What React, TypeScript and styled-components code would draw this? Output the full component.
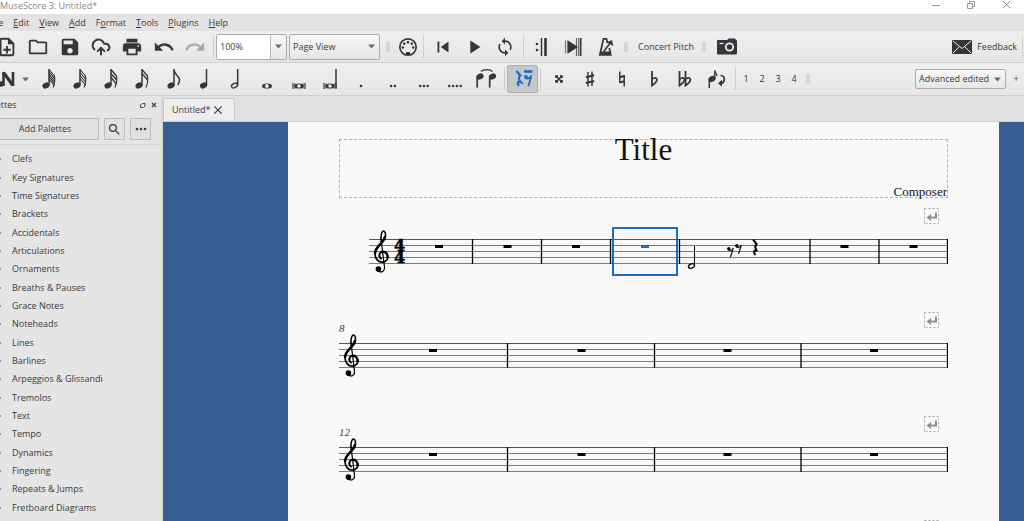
import React from 'react';
import styled, { createGlobalStyle, css } from 'styled-components';
import {
  MdOutlineNoteAdd, MdOutlineFolder, MdSave, MdPrint, MdUndo, MdRedo,
  MdSkipPrevious, MdPlayArrow, MdLoop, MdSearch, MdMoreHoriz, MdClose,
} from 'react-icons/md';
import { CloudUpload } from 'lucide-react';

const ink = '#33373c';
const blue = '#1a6cc4';

const GlobalStyle = createGlobalStyle`
  * { box-sizing: border-box; }
  body { margin: 0; background: #e3e3e3; }
  body, button, input, select {
    font-family: "Open Sans", "Noto Sans", sans-serif;
    font-size: 9px;
    line-height: 14px;
    color: #3a3a3a;
  }
  button, input, select { margin: 0; padding: 0; border: 0; background: none; }
  ul { margin: 0; padding: 0; list-style: none; }
`;

/* ---------- window frame ---------- */

const Window = styled.div`
  height: 100vh;
  display: flex;
  flex-direction: column;
  overflow: hidden;
`;

const TitleBar = styled.header`
  flex: none;
  height: 14px;
  display: flex;
  justify-content: space-between;
  background: #fff;
  color: #8a8a8a;
  line-height: 12px;
  white-space: nowrap;
`;

const WindowControls = styled.div`
  display: flex;
  gap: 24px;
  padding-right: 12px;
`;

const WindowButton = styled.button`
  width: 11px;
  height: 10px;
  svg { display: block; }
`;

const MenuBar = styled.nav`
  flex: none;
  height: 17px;
  display: flex;
  gap: 10px;
  margin-left: -11px;
  background: #e3e3e3;
`;

const MenuItem = styled.button`
  line-height: 16px;
  u { text-underline-offset: 1px; }
`;

/* ---------- toolbars ---------- */

const ToolBar = styled.div<{ $height?: number }>`
  flex: none;
  height: ${p => p.$height ?? 32}px;
  display: flex;
  align-items: center;
  background: linear-gradient(#efefef, #e6e6e6);
  border-bottom: 1px solid #cfcfcf;
`;

const IconGroup = styled.div<{ $width: number; $pull?: number }>`
  flex: 0 0 ${p => p.$width}px;
  margin-left: ${p => -(p.$pull ?? 0)}px;
  display: grid;
  grid-auto-flow: column;
  grid-auto-columns: 1fr;
`;

const IconButton = styled.button<{ $faded?: boolean; $active?: boolean }>`
  height: 28px;
  min-width: 16px;
  display: flex;
  align-items: center;
  justify-content: center;
  color: ${p => (p.$faded ? '#a9abad' : ink)};
  svg { flex: none; display: block; }
  ${p => p.$active && css`
    width: 31px;
    color: ${blue};
    background: #c6c7c9;
    border: 1px solid #b0b0b0;
    border-radius: 2px;
  `}
`;

const TextButton = styled.button`
  display: flex;
  align-items: center;
  gap: 5px;
  padding: 0 4px;
  white-space: nowrap;
`;

const Separator = styled.span<{ $gap?: number }>`
  flex: none;
  width: 1px;
  height: 22px;
  margin: 0 ${p => p.$gap ?? 2}px;
  background: #cdcdcd;
`;

const Handle = styled.span`
  flex: none;
  width: 4px;
  height: 10px;
  margin: 0 6px 0 4px;
  background: radial-gradient(circle, #c6c6c6 0 0.5px, transparent 1px) 0 0 / 2px 2px;
`;

const Spacer = styled.span`flex: 1;`;

const Combo = styled.div<{ $width: number; $small?: boolean }>`
  flex: none;
  width: ${p => p.$width}px;
  height: ${p => (p.$small ? 20 : 26)}px;
  margin-right: 2px;
  display: flex;
  align-items: center;
  position: relative;
  border: 1px solid #ababab;
  border-radius: 2px;
  background: linear-gradient(#f8f8f8, #e6e6e6);
`;

const ZoomInput = styled.input`
  flex: 1;
  min-width: 0;
  height: 100%;
  padding-left: 3px;
  background: #fff;
  border-right: 1px solid #bbb;
`;

const DropButton = styled.button`
  width: 15px;
  height: 100%;
  display: flex;
  align-items: center;
  justify-content: center;
`;

const Select = styled.select`
  appearance: none;
  width: 100%;
  height: 100%;
  padding-left: 3px;
`;

const SelectArrow = styled.span`
  position: absolute;
  right: 4px;
  display: flex;
  pointer-events: none;
`;

/* ---------- palettes ---------- */

const Body = styled.div`
  flex: 1;
  min-height: 0;
  display: flex;
`;

const Palettes = styled.aside`
  flex: 0 0 163px;
  display: flex;
  flex-direction: column;
  padding: 2px 0 4px;
  border-right: 2px solid #d9d9d9;
  background: #e5e5e5;
`;

const PanelHeader = styled.div`
  height: 14px;
  margin-left: -17px;
  padding-right: 2px;
  display: flex;
  align-items: center;
  h2 { margin: 0; flex: 1; font-size: 9px; font-weight: 400; line-height: 14px; }
`;

const PanelButton = styled.button`
  width: 11px;
  height: 11px;
  display: flex;
  align-items: center;
  justify-content: center;
  svg { flex: none; }
`;

const PaletteTools = styled.div`
  display: flex;
  gap: 5px;
  margin-left: -9px;
  padding: 6px 10px 4px 0;
  border-bottom: 1px solid #d4d4d4;
  margin-bottom: 5px;
`;

const PaletteButton = styled.button<{ $wide?: boolean }>`
  flex: ${p => (p.$wide ? '1' : '0 0 21px')};
  height: 22px;
  display: flex;
  align-items: center;
  justify-content: center;
  border: 1px solid #bcbcbc;
  background: #e1e1e1;
`;

const PaletteList = styled.ul`
  flex: 1;
  display: grid;
  grid-auto-rows: 1fr;
`;

const PaletteRow = styled.li`
  min-height: 18px;
  margin-left: -1px;
  display: flex;
  align-items: center;
  gap: 11px;
  white-space: nowrap;
  &::before {
    content: '';
    border: 2px solid transparent;
    border-left: 2px solid #444;
    border-right: 0;
  }
`;

/* ---------- document ---------- */

const Main = styled.main`
  flex: 1;
  min-width: 0;
  display: flex;
  flex-direction: column;
`;

const TabBar = styled.div`
  flex: none;
  height: 26px;
  padding-top: 2px;
  display: flex;
  background: #e1e1e1;
  border-bottom: 1px solid #d0d0d0;
`;

const Tab = styled.div`
  width: 72px;
  padding: 0 11px 0 8px;
  display: flex;
  align-items: center;
  justify-content: space-between;
  background: #ededed;
  border: 1px solid #c9c9c9;
  border-bottom: 0;
`;

const Canvas = styled.div`
  flex: 1;
  min-height: 0;
  overflow: hidden;
  padding: 0 25px 0 125px;
  background: #375d93;
`;

const Page = styled.article`
  min-height: 100%;
  padding: 17px 51px 0;
  background: #f9f9f9;
`;

const TitleFrame = styled.div`
  height: 59px;
  margin-bottom: 3px;
  display: flex;
  flex-direction: column;
  justify-content: space-between;
  border: 1px dashed #b3b3b3;
  color: #111;
  font-family: "Liberation Serif", serif;
  h1 { margin: 0; font-size: 31px; font-weight: 400; line-height: 20px; text-align: center; }
  p { margin: 0; font-size: 13px; line-height: 11px; text-align: right; }
`;

const System = styled.svg`
  display: block;
  width: 100%;
  height: auto;
`;

/* ---------- small drawings ---------- */

const Arrow = () => (
  <svg width="7" height="5" viewBox="0 0 7 5"><path d="M0 0.5h7L3.5 4.5z" fill="#6b6b6b" /></svg>
);

const Glyph = ({ children }: { children: React.ReactNode }) => (
  <svg width="24" height="24" viewBox="0 0 24 24" fill="none" stroke="currentColor" strokeWidth="1.5">
    {children}
  </svg>
);

const Head = ({ x = 10.5, y = 18.5 }: { x?: number; y?: number }) => (
  <ellipse cx={x} cy={y} rx="3.7" ry="2.8" transform={`rotate(-25 ${x} ${y})`} fill="currentColor" stroke="none" />
);

const FlaggedNote = ({ flags }: { flags: number }) => {
  const step = 12 / flags;
  return (
    <Glyph>
      <Head x={9} />
      <path d="M12 18V2" />
      {flags === 1 ? (
        <path d="M12 3C12.5 8 17.5 9 17.5 13C17.5 15 16.5 16.5 15.8 18" strokeWidth="1.5" />
      ) : (
        Array.from({ length: flags }, (_, i) => (
          <path
            key={i}
            d={`M12 ${2.5 + i * Math.min(step, 4)}l5.5 6.5`}
            strokeWidth={flags > 3 ? 1.1 : 1.3}
          />
        ))
      )}
      {flags > 1 && <path d="M17.3 8.500C18.200 12 18 16 16 20.500" strokeWidth="1.200" />}
    </Glyph>
  );
};

const HalfIcon = () => (
  <Glyph>
    <ellipse cx="10.500" cy="18.5" rx="3.2" ry="2" transform="rotate(-28 10.500 18.5)" strokeWidth="1.4" />
    <path d="M13.7 18V2" />
  </Glyph>
);

const WholeIcon = () => (
  <Glyph>
    <path fillRule="evenodd" fill="currentColor" stroke="none" d="M7 19a5 2.6 0 1 0 10 0a5 2.6 0 1 0 -10 0zM10.2 18.2c-.6 1 .4 2.8 1.7 2.7c1.4 0 2.4-1 1.9-2.1c-.4-1.1-1.200-1.700-2.200-1.700c-.7 0-1.200.4-1.400 1.100z" />
  </Glyph>
);

const BreveIcon = ({ stem }: { stem?: boolean }) => (
  <Glyph>
    <path d="M6 16v6M18 16v6" strokeWidth="1.200" />
    <path d="M8 16.500v5M16 16.500v5" strokeWidth="1.200" />
    <path fillRule="evenodd" fill="currentColor" stroke="none" d="M7.500 19a4.500 2.600 0 1 0 9 0a4.500 2.600 0 1 0 -9 0zM10.400 18.200c-.6 1 .4 2.600 1.500 2.500c1.300 0 2.200-.9 1.800-2c-.4-1-1.200-1.500-2-1.500c-.7 0-1.100.3-1.300 1z" />
    {stem && <path d="M18 21V2" />}
  </Glyph>
);

const DotsIcon = ({ count }: { count: number }) => (
  <Glyph>
    {Array.from({ length: count }, (_, i) => (
      <circle key={i} cx={12 + (i - (count - 1) / 2) * 3.8} cy="19" r="1.3" fill="currentColor" stroke="none" />
    ))}
  </Glyph>
);

const TieIcon = () => (
  <Glyph>
    <Head x={6} y={9.500} />
    <Head x={18.500} y={9.500} />
    <path d="M3.200 10v10.500M15.700 10v10.500" strokeWidth="1.700" />
    <path d="M7 4.500C9.500 2 16 2 18.500 4.500" strokeWidth="1.300" />
  </Glyph>
);

const VoiceRestIcon = () => (
  <Glyph>
    <path d="M5.500 4L9.300 8.500C7 10.500 7.200 12 9.800 15.200C6.500 14 5.800 16 8 19" strokeWidth="2.200" />
    <path d="M13 4.500h8.500" strokeWidth="2.600" />
    <circle cx="15" cy="10" r="1.900" fill="currentColor" stroke="none" />
    <path d="M15 11.500C18 12 19.500 10.500 20.500 8.500L17.500 19" strokeWidth="1.700" />
  </Glyph>
);

const DoubleSharp = () => (
  <Glyph>
    <path d="M9.500 9.500l5 5M14.500 9.500l-5 5" strokeWidth="1.600" />
    <path d="M8.200 8.200h2.800v2.800h-2.800zM13 8.200h2.800v2.800h-2.800zM8.200 13h2.800v2.800h-2.800zM13 13h2.800v2.800h-2.800z" fill="currentColor" stroke="none" />
  </Glyph>
);

const Sharp = () => (
  <Glyph>
    <path d="M10 5v14.500M14 4.500v14.500" strokeWidth="1.500" />
    <path d="M7.800 10.300l8.400-2M7.800 16l8.400-2" strokeWidth="2.200" />
  </Glyph>
);

const Natural = () => (
  <Glyph>
    <path d="M9.800 4.500v11.500M14.200 8v11.500" strokeWidth="1.500" />
    <path d="M9.800 10.200l4.400-1.200M9.800 15.500l4.400-1.200" strokeWidth="2.200" />
  </Glyph>
);

const Flat = ({ x = 10 }: { x?: number }) => (
  <path d={`M${x} 4v14.500c3-2 5-3.800 4.900-6c-.1-2-2.900-2.200-4.900 0`} strokeWidth="1.800" />
);

const FlipIcon = () => (
  <Glyph>
    <Head x={7} y={12} />
    <path d="M4.300 12.500v8.500M9.800 11.500V3.500" />
    <path d="M9.800 4C10 6 12.500 6.500 12 9" strokeWidth="1.200" />
    <path d="M15.500 8.500C18.500 8.500 19.700 10.500 19.200 13c-.3 2-1.500 3.200-3.700 3.500" strokeWidth="1.700" />
    <path d="M17 12.800v7l-4-3.500z" fill="currentColor" stroke="none" />
  </Glyph>
);

const NoteInputIcon = () => (
  <Glyph>
    <path d="M9.500 5v14M19 5v14" strokeWidth="2.600" />
    <path d="M9.500 5.500l9.500 13" strokeWidth="3.200" />
    <ellipse cx="6.500" cy="17" rx="3.800" ry="2.700" fill="currentColor" stroke="none" />
  </Glyph>
);

const MidiIcon = () => (
  <Glyph>
    <circle cx="12" cy="12" r="8.200" strokeWidth="1.700" />
    <path d="M10 17h4v3h-4z" fill="currentColor" stroke="none" />
    {[[6.800, 12.500], [8.200, 8.800], [12, 7.300], [15.800, 8.800], [17.200, 12.500]].map(([x, y]) => (
      <circle key={x} cx={x} cy={y} r="1.300" fill="currentColor" stroke="none" />
    ))}
  </Glyph>
);

const RepeatIcon = () => (
  <Glyph>
    <path d="M11.500 3v18" strokeWidth="1.500" />
    <path d="M15.500 3v18" strokeWidth="2.600" />
    <circle cx="7" cy="9" r="1.300" fill="currentColor" stroke="none" />
    <circle cx="7" cy="15" r="1.300" fill="currentColor" stroke="none" />
  </Glyph>
);

const PanIcon = () => (
  <Glyph>
    <path d="M4.500 5.500v13M6.500 5.500v13" strokeWidth="1.200" strokeOpacity=".6" />
    <path d="M7 5.500L17 12l-10 6.500z" fill="currentColor" stroke="none" />
    <path d="M15.500 3v18M17.700 3v18" strokeWidth="1.200" strokeOpacity=".75" />
    <path d="M19.700 3v18" strokeWidth="1.600" />
  </Glyph>
);

const MetronomeIcon = () => (
  <Glyph>
    <path d="M15.500 8L14.500 3.800H11.500L7.800 20h11l-1.500-7" strokeWidth="1.700" />
    <path d="M8.500 16.500h9.500v3.500H7.800z" fill="currentColor" stroke="none" />
    <path d="M11.500 17L19.500 6" strokeWidth="1.500" />
    <path d="M16.200 7.200l3.300-.9l.7 3.200z" fill="currentColor" />
  </Glyph>
);

const CameraIcon = () => (
  <Glyph>
    <path fill="currentColor" stroke="none" d="M3.500 5h8.500l1.500-1.500h6.500L21 5a1 1 0 0 1 1 1v12.500a1 1 0 0 1-1 1H3a1 1 0 0 1-1-1V6a1 1 0 0 1 1.500-1z" />
    <circle cx="14.500" cy="12" r="3.700" stroke="#f0f0f0" strokeWidth="1.800" />
    <path d="M4.500 8.500h4" stroke="#f0f0f0" strokeWidth="1.300" />
  </Glyph>
);

const MailIcon = () => (
  <svg width="20" height="14" viewBox="0 0 20 14">
    <rect width="20" height="14" rx="1" fill={ink} />
    <path d="M1 1l9 7.500L19 1M1 13l6.500-6.500M19 13l-6.500-6.500" fill="none" stroke="#eee" strokeWidth="1" />
  </svg>
);

/* ---------- score engraving ---------- */

const SPACE = 6;
const TOP = 38.5;

const TrebleClef = ({ x }: { x: number }) => (
  <g transform={`translate(${x} ${TOP})`} fill="none" stroke="#000" strokeLinecap="round">
    <path d="M7.300 2C6 -4 8 -8.800 10 -8.400C12 -7.400 11.800 -3.500 10.800 -1" strokeWidth="1.500" />
    <path d="M10.900 -2.500C9.500 4 1.500 6.500 1.100 13.500" strokeWidth="2.600" />
    <path d="M.900 13.500C1 19.500 4.500 22.800 8.500 22.600C12.300 22.400 14 20 13.700 16.700" strokeWidth="1.700" />
    <path d="M13.500 17.800C13.800 14 11.500 12 8.700 12.300" strokeWidth="2.400" />
    <path d="M8.700 12.200C5.100 12.200 4.200 16.800 6.900 19" strokeWidth="2" />
    <path d="M7.300 2L10.500 27.500C10.900 31.500 8 33.300 5 32" strokeWidth="1.200" />
    <circle cx="4.400" cy="29.600" r="2.800" fill="#000" stroke="none" />
  </g>
);

const LineBreakMark = () => (
  <g>
    <rect x="585.500" y="7.500" width="14" height="15" fill="none" stroke="#a8a8a8" strokeDasharray="2 2" />
    <path d="M597 11.500v5h-6" fill="none" stroke="#8f8f8f" strokeWidth="2" />
    <path d="M592 13v7l-4.500-3.500z" fill="#8f8f8f" />
  </g>
);

const EighthRest = ({ x, y }: { x: number; y: number }) => (
  <g transform={`translate(${x} ${y})`}>
    <circle cx="1.800" cy="1.800" r="1.700" />
    <path d="M1.500 3C4 4 5.500 3 6.300 1L3.500 10" fill="none" stroke="#000" strokeWidth="1.100" />
  </g>
);

type StaffProps = {
  start?: number;
  bars: number[];
  rests: number[];
  selected?: number;
  number?: string;
  children?: React.ReactNode;
};

const Staff = ({ start = 0, bars, rests, selected, number, children }: StaffProps) => (
  <System viewBox="0 0 609 104" role="img" aria-label="Staff">
    <LineBreakMark />
    {number && (
      <text x="0" y="27" fontFamily="Liberation Serif, serif" fontStyle="italic" fontSize="11" fill="#444">{number}</text>
    )}
    {[0, 1, 2, 3, 4].map(i => (
      <path key={i} d={`M${start} ${TOP + i * SPACE}H609`} stroke={i ? '#7c7c7c' : '#555'} />
    ))}
    {bars.map(x => <path key={x} d={`M${x} ${TOP - 0.5}v25`} stroke="#000" strokeWidth="1.300" />)}
    {rests.map(x => (
      <rect key={x} x={x - 4} y={TOP + SPACE - 0.5} width="8" height="3" fill={x === selected ? blue : '#000'} />
    ))}
    <TrebleClef x={start + 5} />
    {children}
  </System>
);

/* ---------- data ---------- */

const menus = ['File', 'Edit', 'View', 'Add', 'Format', 'Tools', 'Plugins', 'Help'];
/* position of the underlined letter where it is not the first one */
const mnemonic: Record<string, number> = { Format: 1 };

const paletteNames = [
  'Clefs', 'Key Signatures', 'Time Signatures', 'Brackets', 'Accidentals', 'Articulations',
  'Ornaments', 'Breaths & Pauses', 'Grace Notes', 'Noteheads', 'Lines', 'Barlines',
  'Arpeggios & Glissandi', 'Tremolos', 'Text', 'Tempo', 'Dynamics', 'Fingering',
  'Repeats & Jumps', 'Fretboard Diagrams',
];

const fileActions: [string, React.ReactNode][] = [
  ['New', <MdOutlineNoteAdd size={22} />],
  ['Open', <MdOutlineFolder size={22} />],
  ['Save', <MdSave size={22} />],
  ['Save online', <CloudUpload size={20} strokeWidth={2.4} />],
  ['Print', <MdPrint size={22} />],
  ['Undo', <MdUndo size={22} />],
  ['Redo', <MdRedo size={22} />],
];

const durations: [string, React.ReactNode][] = [
  ['128th', <FlaggedNote flags={5} />],
  ['64th', <FlaggedNote flags={4} />],
  ['32nd', <FlaggedNote flags={3} />],
  ['16th', <FlaggedNote flags={2} />],
  ['Eighth', <FlaggedNote flags={1} />],
  ['Quarter', <Glyph><Head x={10.500} /><path d="M13.500 18V2" /></Glyph>],
  ['Half', <HalfIcon />],
  ['Whole', <WholeIcon />],
  ['Breve', <BreveIcon />],
  ['Longa', <BreveIcon stem />],
  ['Dot', <DotsIcon count={1} />],
  ['Double dot', <DotsIcon count={2} />],
  ['Triple dot', <DotsIcon count={3} />],
  ['Quadruple dot', <DotsIcon count={4} />],
  ['Tie', <TieIcon />],
];

const accidentals: [string, React.ReactNode][] = [
  ['Double sharp', <DoubleSharp />],
  ['Sharp', <Sharp />],
  ['Natural', <Natural />],
  ['Flat', <Glyph><Flat /></Glyph>],
  ['Double flat', <Glyph><Flat x={6.500} /><Flat x={12.500} /></Glyph>],
  ['Flip direction', <FlipIcon />],
];

const Actions = ({ items }: { items: [string, React.ReactNode][] }) => (
  <>
    {items.map(([label, icon]) => (
      <IconButton key={label} aria-label={label} $faded={label === 'Redo'}>{icon}</IconButton>
    ))}
  </>
);

export default function App() {
  return (
    <>
      <GlobalStyle />
      <Window>
        <TitleBar>
          <span>MuseScore 3: Untitled*</span>
          <WindowControls>
            <WindowButton aria-label="Minimize">
              <svg width="11" height="10" fill="none" stroke="#999"><path d="M1 5.500h8" /></svg>
            </WindowButton>
            <WindowButton aria-label="Restore">
              <svg width="11" height="10" fill="none" stroke="#999"><path d="M1.500 3.500h5v5h-5zM3.500 3.500v-2h5v5h-2" /></svg>
            </WindowButton>
            <WindowButton aria-label="Close">
              <svg width="11" height="10" fill="none" stroke="#888"><path d="M2 1l7 7M9 1l-7 7" /></svg>
            </WindowButton>
          </WindowControls>
        </TitleBar>

        <MenuBar>
          {menus.map(name => {
            const at = mnemonic[name] ?? 0;
            return (
              <MenuItem key={name}>{name.slice(0, at)}<u>{name[at]}</u>{name.slice(at + 1)}</MenuItem>
            );
          })}
        </MenuBar>

        <ToolBar>
          <IconGroup $width={220} $pull={9}><Actions items={fileActions} /></IconGroup>
          <Separator />
          <Combo $width={71}>
            <ZoomInput aria-label="Zoom" defaultValue="100%" />
            <DropButton aria-label="Zoom levels"><Arrow /></DropButton>
          </Combo>
          <Combo $width={91}>
            <Select aria-label="View mode"><option>Page View</option></Select>
            <SelectArrow><Arrow /></SelectArrow>
          </Combo>
          <Handle />
          <IconGroup $width={24}><Actions items={[['MIDI input', <MidiIcon />]]} /></IconGroup>
          <Separator $gap={3} />
          <IconGroup $width={94}>
            <Actions items={[
              ['Rewind', <MdSkipPrevious size={22} />],
              ['Play', <MdPlayArrow size={22} />],
              ['Loop', <MdLoop size={20} />],
            ]} />
          </IconGroup>
          <Separator />
          <IconGroup $width={94}>
            <Actions items={[
              ['Play repeats', <RepeatIcon />],
              ['Pan score', <PanIcon />],
              ['Metronome', <MetronomeIcon />],
            ]} />
          </IconGroup>
          <Handle />
          <TextButton>Concert Pitch</TextButton>
          <Handle />
          <IconGroup $width={31}><Actions items={[['Image capture', <CameraIcon />]]} /></IconGroup>
          <Spacer />
          <TextButton><MailIcon />Feedback</TextButton>
          <Separator $gap={1} />
        </ToolBar>

        <ToolBar $height={33}>
          <IconGroup $width={24} $pull={6}><Actions items={[['Note input', <NoteInputIcon />]]} /></IconGroup>
          <DropButton aria-label="Note input modes"><Arrow /></DropButton>
          <IconGroup $width={469}><Actions items={durations} /></IconGroup>
          <Separator />
          <IconButton $active aria-label="Rest"><VoiceRestIcon /></IconButton>
          <Separator />
          <IconGroup $width={190}><Actions items={accidentals} /></IconGroup>
          <Separator />
          <IconGroup $width={64}>
            {['1', '2', '3', '4'].map(v => <IconButton key={v}>{v}</IconButton>)}
          </IconGroup>
          <Handle />
          <Spacer />
          <Combo $width={91} $small>
            <Select aria-label="Workspace"><option>Advanced edited</option></Select>
            <SelectArrow><Arrow /></SelectArrow>
          </Combo>
          <IconButton aria-label="Add workspace">+</IconButton>
        </ToolBar>

        <Body>
          <Palettes>
            <PanelHeader>
              <h2>Palettes</h2>
              <PanelButton aria-label="Undock">
                <svg width="7" height="7" fill="none" stroke="#444"><path d="M3 1.500L1.500 3v2.500H4M3.500 1.500H6V4L4.500 5.500" /></svg>
              </PanelButton>
              <PanelButton aria-label="Close panel">
                <svg width="6" height="6" fill="none" stroke="#444" strokeWidth="1.300"><path d="M1 1l4 4M5 1L1 5" /></svg>
              </PanelButton>
            </PanelHeader>
            <PaletteTools>
              <PaletteButton $wide>Add Palettes</PaletteButton>
              <PaletteButton aria-label="Search palettes"><MdSearch size={15} /></PaletteButton>
              <PaletteButton aria-label="More"><MdMoreHoriz size={16} /></PaletteButton>
            </PaletteTools>
            <PaletteList>
              {paletteNames.map(name => <PaletteRow key={name}>{name}</PaletteRow>)}
            </PaletteList>
          </Palettes>

          <Main>
            <TabBar>
              <Tab>Untitled*<PanelButton aria-label="Close tab"><MdClose size={14} /></PanelButton></Tab>
            </TabBar>
            <Canvas>
              <Page>
                <TitleFrame>
                  <h1>Title</h1>
                  <p>Composer</p>
                </TitleFrame>
                <Staff
                  start={30}
                  bars={[133.500, 202.500, 271.500, 340.500, 471, 540, 608.500]}
                  rests={[100, 168.500, 237, 306, 505.500, 574.500]}
                  selected={306}
                >
                  <g fontFamily="DejaVu Serif, serif" fontWeight="700" fontSize="16" stroke="#000" strokeWidth=".5">
                    <text x="55" y="50">4</text>
                    <text x="55" y="62">4</text>
                  </g>
                  <rect x="274" y="27" width="64" height="47" fill="none" stroke={blue} strokeWidth="2" />
                  <ellipse cx="352.500" cy="65" rx="3.200" ry="2" transform="rotate(-25 352.500 65)" fill="none" stroke="#000" strokeWidth="1.300" />
                  <path d="M355.500 64V45" stroke="#000" />
                  <EighthRest x={388} y={46} />
                  <EighthRest x={396} y={43} />
                  <path d="M414 38.500L417.500 43C415.500 45 415.800 47 418 50C415 48.500 413.800 51 416.500 54" fill="none" stroke="#000" strokeWidth="2" />
                </Staff>
                <Staff number="8" bars={[168.500, 315.500, 462, 608.500]} rests={[94, 242.500, 388.500, 535]} />
                <Staff number="12" bars={[168.500, 315.500, 462, 608.500]} rests={[94, 242.500, 388.500, 535]} />
                <Staff bars={[168.500, 315.500, 462, 608.500]} rests={[94, 242.500, 388.500, 535]} />
              </Page>
            </Canvas>
          </Main>
        </Body>
      </Window>
    </>
  );
}
